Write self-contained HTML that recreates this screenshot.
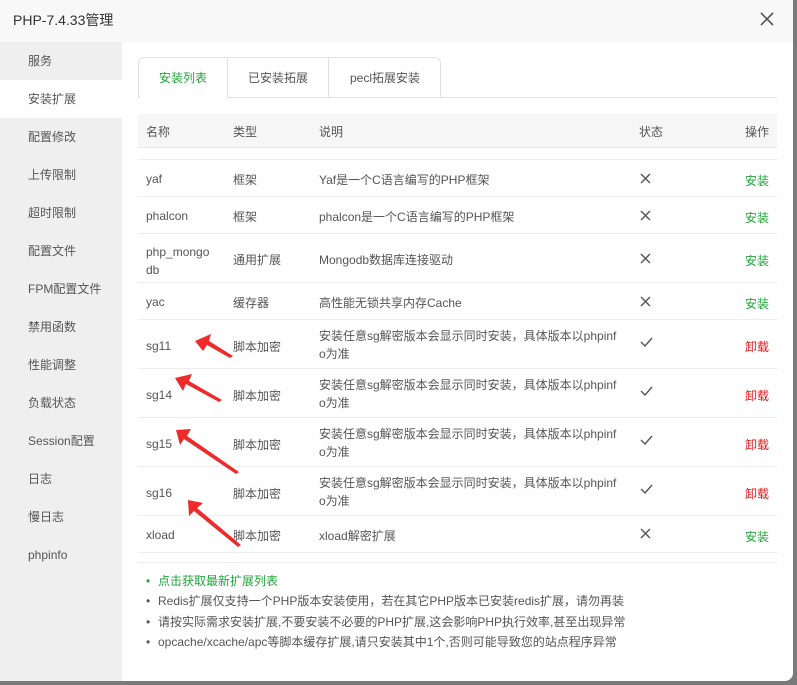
<!DOCTYPE html>
<html><head><meta charset="utf-8"><style>
*{margin:0;padding:0;box-sizing:border-box}
body{width:797px;height:685px;background:#7a7a7a;position:relative;overflow:hidden;font-family:"Liberation Sans","Noto Sans CJK SC",sans-serif;font-size:12px;color:#555}
.dlg{position:absolute;left:0;top:0;width:793px;height:681px;background:#fff;border-radius:0 0 8px 0;overflow:hidden}
.title{position:absolute;left:0;top:0;width:793px;height:42px;background:#f8f8f8;font-size:14px;color:#333;line-height:40px;padding-left:13px}
.close{position:absolute;left:760px;top:12px}
.side{position:absolute;left:0;top:42px;width:122px;height:640px;background:#efefef}
.side div{height:38px;line-height:38px;padding-left:28px;color:#555;font-size:12px}
.side .on{background:#fff}
.tabs{position:absolute;left:138px;top:57px;width:303px;height:41px;border:1px solid #e2e2e2;border-bottom:none;border-radius:6px 6px 0 0;background:#fff}
.tabs span{position:absolute;top:0;height:40px;line-height:40px;text-align:center;font-size:12px;color:#555;border-right:1px solid #e2e2e2}
.tabline{position:absolute;left:227px;top:97px;width:550px;height:1px;background:#e2e2e2}
.hd{position:absolute;left:138px;top:114px;width:639px;height:34px;background:#f6f6f6;border-bottom:1px solid #e8e8e8}
.c{position:absolute;white-space:nowrap}
.row{position:absolute;left:138px;width:639px;border-bottom:1px solid #eee}
.g{color:#20a53a}.r{color:#e0161a}
.x,.k{position:absolute;left:640px}
.notes{position:absolute;left:146px;top:571px;font-size:12px;line-height:20.3px;color:#555}
.notes div:before{content:"•";position:absolute;left:0}
.notes div{position:relative;padding-left:12px}
</style></head><body>
<div class="dlg">
<div class="title">PHP-7.4.33管理</div>
<svg class="close" width="14" height="14" viewBox="0 0 14 14"><path d="M1 1L13 13M13 1L1 13" stroke="#555" stroke-width="1.6"/></svg>
<div class="side">
<div>服务</div><div class="on">安装扩展</div><div>配置修改</div><div>上传限制</div><div>超时限制</div><div>配置文件</div><div>FPM配置文件</div><div>禁用函数</div><div>性能调整</div><div>负载状态</div><div>Session配置</div><div>日志</div><div>慢日志</div><div>phpinfo</div>
</div>
<div class="tabs">
<span style="left:0;width:89px;color:#20a53a">安装列表</span>
<span style="left:89px;width:101px">已安装拓展</span>
<span style="left:190px;width:112px;border-right:none">pecl拓展安装</span>
</div>
<div class="tabline"></div>
<div class="hd"></div>
<div class="c" style="left:146px;top:123px">名称</div>
<div class="c" style="left:233px;top:123px">类型</div>
<div class="c" style="left:319px;top:123px">说明</div>
<div class="c" style="left:639px;top:123px">状态</div>
<div class="c" style="left:745px;top:123px">操作</div>
<div class="row" style="top:148px;height:12px;border-bottom:1px solid #eee"></div>

<div class="row" style="top:160px;height:37px"></div>
<div class="c" style="left:146px;top:172px">yaf</div><div class="c" style="left:233px;top:171px">框架</div><div class="c" style="left:319px;top:171px">Yaf是一个C语言编写的PHP框架</div><svg class="x" style="top:173px" width="11" height="11"><path d="M1 1L10 10M10 1L1 10" stroke="#555" stroke-width="1.4"/></svg><div class="c g" style="left:745px;top:172px">安装</div>

<div class="row" style="top:197px;height:37px"></div>
<div class="c" style="left:146px;top:209px">phalcon</div><div class="c" style="left:233px;top:208px">框架</div><div class="c" style="left:319px;top:208px">phalcon是一个C语言编写的PHP框架</div><svg class="x" style="top:210px" width="11" height="11"><path d="M1 1L10 10M10 1L1 10" stroke="#555" stroke-width="1.4"/></svg><div class="c g" style="left:745px;top:209px">安装</div>

<div class="row" style="top:234px;height:49px"></div>
<div class="c" style="left:146px;top:243px;line-height:18px">php_mongo<br>db</div><div class="c" style="left:233px;top:251px">通用扩展</div><div class="c" style="left:319px;top:251px">Mongodb数据库连接驱动</div><svg class="x" style="top:253px" width="11" height="11"><path d="M1 1L10 10M10 1L1 10" stroke="#555" stroke-width="1.4"/></svg><div class="c g" style="left:745px;top:252px">安装</div>

<div class="row" style="top:283px;height:37px"></div>
<div class="c" style="left:146px;top:295px">yac</div><div class="c" style="left:233px;top:294px">缓存器</div><div class="c" style="left:319px;top:294px">高性能无锁共享内存Cache</div><svg class="x" style="top:296px" width="11" height="11"><path d="M1 1L10 10M10 1L1 10" stroke="#555" stroke-width="1.4"/></svg><div class="c g" style="left:745px;top:295px">安装</div>

<div class="row" style="top:320px;height:49px"></div>
<div class="c" style="left:146px;top:339px">sg11</div><div class="c" style="left:233px;top:338px">脚本加密</div><div class="c" style="left:319px;top:327px;line-height:18px">安装任意sg解密版本会显示同时安装，具体版本以phpinf<br>o为准</div><svg class="k" style="top:337px" width="13" height="10"><path d="M1 5L5 9L12 1" stroke="#555" stroke-width="1.4" fill="none"/></svg><div class="c r" style="left:745px;top:338px">卸载</div>

<div class="row" style="top:369px;height:49px"></div>
<div class="c" style="left:146px;top:388px">sg14</div><div class="c" style="left:233px;top:387px">脚本加密</div><div class="c" style="left:319px;top:376px;line-height:18px">安装任意sg解密版本会显示同时安装，具体版本以phpinf<br>o为准</div><svg class="k" style="top:386px" width="13" height="10"><path d="M1 5L5 9L12 1" stroke="#555" stroke-width="1.4" fill="none"/></svg><div class="c r" style="left:745px;top:387px">卸载</div>

<div class="row" style="top:418px;height:49px"></div>
<div class="c" style="left:146px;top:437px">sg15</div><div class="c" style="left:233px;top:436px">脚本加密</div><div class="c" style="left:319px;top:425px;line-height:18px">安装任意sg解密版本会显示同时安装，具体版本以phpinf<br>o为准</div><svg class="k" style="top:435px" width="13" height="10"><path d="M1 5L5 9L12 1" stroke="#555" stroke-width="1.4" fill="none"/></svg><div class="c r" style="left:745px;top:436px">卸载</div>

<div class="row" style="top:467px;height:49px"></div>
<div class="c" style="left:146px;top:486px">sg16</div><div class="c" style="left:233px;top:485px">脚本加密</div><div class="c" style="left:319px;top:474px;line-height:18px">安装任意sg解密版本会显示同时安装，具体版本以phpinf<br>o为准</div><svg class="k" style="top:484px" width="13" height="10"><path d="M1 5L5 9L12 1" stroke="#555" stroke-width="1.4" fill="none"/></svg><div class="c r" style="left:745px;top:485px">卸载</div>

<div class="row" style="top:516px;height:37px"></div>
<div class="c" style="left:146px;top:528px">xload</div><div class="c" style="left:233px;top:527px">脚本加密</div><div class="c" style="left:319px;top:527px">xload解密扩展</div><svg class="x" style="top:528px" width="11" height="11"><path d="M1 1L10 10M10 1L1 10" stroke="#555" stroke-width="1.4"/></svg><div class="c g" style="left:745px;top:528px">安装</div>
<div class="row" style="top:553px;height:10px"></div>

<div class="notes">
<div class="g">点击获取最新扩展列表</div>
<div>Redis扩展仅支持一个PHP版本安装使用，若在其它PHP版本已安装redis扩展，请勿再装</div>
<div>请按实际需求安装扩展,不要安装不必要的PHP扩展,这会影响PHP执行效率,甚至出现异常</div>
<div>opcache/xcache/apc等脚本缓存扩展,请只安装其中1个,否则可能导致您的站点程序异常</div>
</div>

<svg style="position:absolute;left:0;top:0" width="797" height="685">
<g fill="#f02a2a">
<polygon points="195,341 211,334 209,341 233,356 230,358 207,345 203,351"/>
<polygon points="175,378 192,374 189,381 222,400 219,402 186,384 183,391"/>
<polygon points="176,430 191,429 187,436 239,472 236,474 184,439 180,445"/>
<polygon points="188,500 203,503 197,508 241,545 238,547 194,511 189,516"/>
</g>
</svg>
</div>
</body></html>
